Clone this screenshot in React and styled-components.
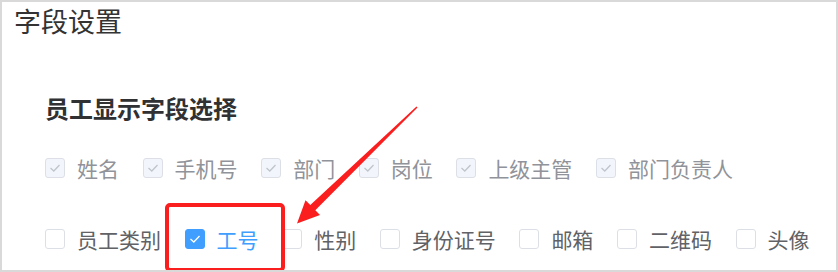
import React from 'react';
import styled, { createGlobalStyle } from 'styled-components';

const GlobalStyle = createGlobalStyle`
    html, body {
        margin: 0;
        padding: 0;
        background: #ffffff;
    }
    body {
        font-family: "Noto Sans CJK SC", "Noto Sans", sans-serif;
    }
`;

const fixedFields = ['姓名', '手机号', '部门', '岗位', '上级主管', '部门负责人'];
const optionalFields = [
    { label: '员工类别', checked: false },
    { label: '工号', checked: true },
    { label: '性别', checked: false },
    { label: '身份证号', checked: false },
    { label: '邮箱', checked: false },
    { label: '二维码', checked: false },
    { label: '头像', checked: false },
];

const CheckMark = ({ color }) => (
    <svg width="20" height="20" viewBox="0 0 20 20">
        <polyline points="5.5,10 8.8,13 14.5,7" fill="none" stroke={color} strokeWidth="1.3" />
    </svg>
);

const Field = ({ label, checked, disabled }) => {
    const markColor = disabled ? '#c0c4cc' : '#ffffff';
    return (
        <Item>
            <Box $checked={checked} $disabled={disabled}>
                {checked && <CheckMark color={markColor} />}
            </Box>
            <Label $checked={checked} $disabled={disabled}>
                {label}
            </Label>
        </Item>
    );
};

const App = () => {
    return (
        <>
            <GlobalStyle />
            <Frame>
                <Title>字段设置</Title>
                <Section>
                    <Heading>员工显示字段选择</Heading>
                    <Row>
                        {fixedFields.map((f) => (
                            <Field key={f} label={f} checked disabled />
                        ))}
                    </Row>
                    <Row $second>
                        {optionalFields.map((f) => (
                            <Field key={f.label} label={f.label} checked={f.checked} />
                        ))}
                    </Row>
                </Section>

                <Highlight />
                <Arrow width="838" height="272" viewBox="0 0 838 272">
                    <polygon
                        points="417.5,107.5 315.3,210.3 320,215 297,223.5 305.5,200.2 310.3,205.1 416.5,106.5"
                        fill="#fa1e1e"
                    />
                </Arrow>
            </Frame>
        </>
    );
};

export default App;

const Frame = styled.div`
    position: relative;
    width: 838px;
    height: 272px;
    box-sizing: border-box;
    border: 2px solid #d9d9d9;
    background: #ffffff;
    overflow: hidden;
`;

const Title = styled.div`
    padding: 1px 0 0 12px;
    font-size: 27px;
    line-height: 36px;
    color: #333333;
`;

const Section = styled.div`
    padding-left: 43px;
`;

const Heading = styled.div`
    margin-top: 53px;
    font-size: 24px;
    line-height: 32px;
    font-weight: 700;
    color: #303133;
`;

const Row = styled.div`
    display: flex;
    align-items: center;
    height: 30px;
    margin-top: ${(p) => (p.$second ? '41px' : '29px')};
`;

const Item = styled.div`
    display: flex;
    align-items: center;
    margin-right: 23.6px;
`;

const Box = styled.span`
    width: 20px;
    height: 20px;
    box-sizing: border-box;
    border-radius: 3px;
    display: inline-flex;
    align-items: center;
    justify-content: center;
    border: 1px solid ${(p) => (p.$checked && !p.$disabled ? '#409eff' : '#dcdfe6')};
    background: ${(p) => (p.$disabled ? '#f2f6fc' : p.$checked ? '#409eff' : '#ffffff')};
    svg {
        display: block;
        margin: -1px;
    }
`;

const Label = styled.span`
    margin-left: 12px;
    font-size: 21px;
    line-height: 30px;
    color: ${(p) => (p.$disabled ? '#909399' : p.$checked ? '#409eff' : '#606266')};
`;

const Highlight = styled.div`
    position: absolute;
    left: 163px;
    top: 201px;
    width: 120px;
    height: 69px;
    box-sizing: border-box;
    border: 4px solid #fa1e1e;
    border-radius: 5px;
`;

const Arrow = styled.svg`
    position: absolute;
    left: -2px;
    top: -2px;
    pointer-events: none;
`;
